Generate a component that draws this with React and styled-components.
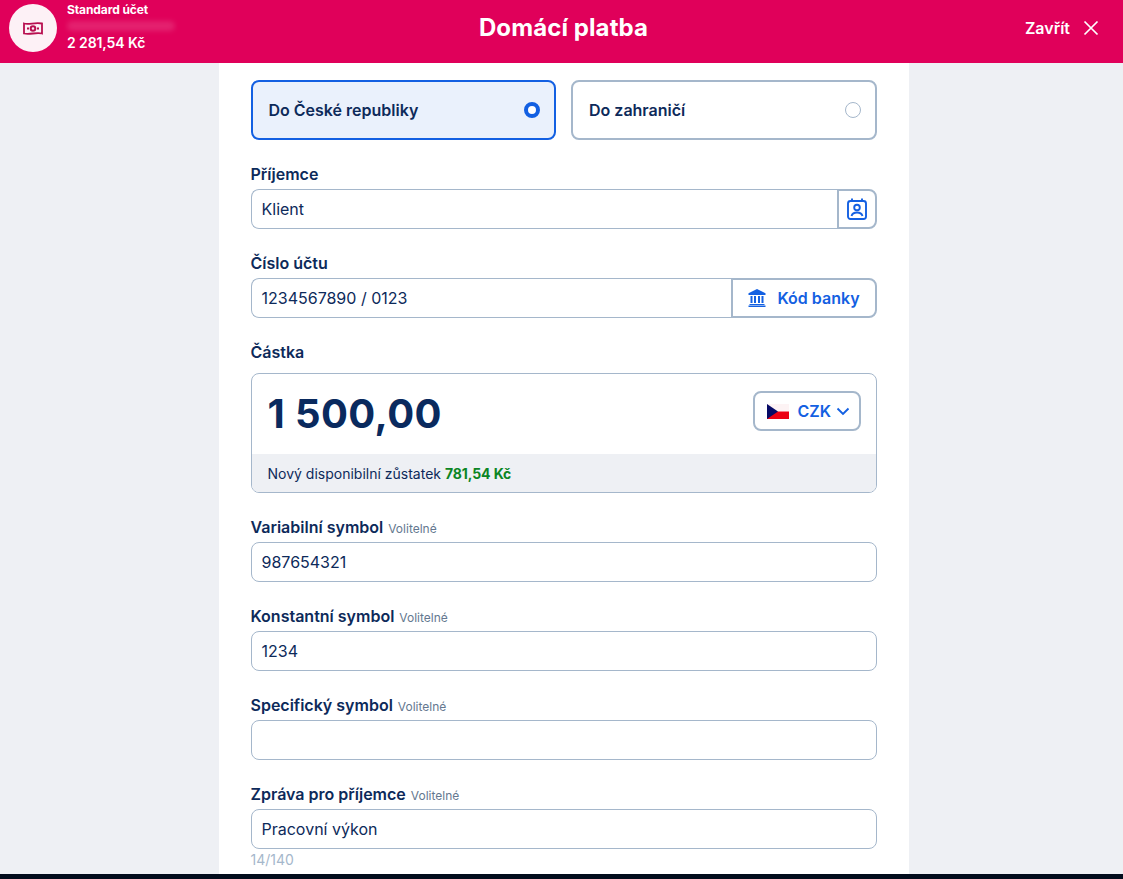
import React from "react";
import styled, { createGlobalStyle } from "styled-components";

const Global = createGlobalStyle`
  html, body { margin: 0; padding: 0; height: 100%; overflow: hidden; }
  body { font-family: Inter, "Noto Sans", sans-serif; color: #0d2a5a; }
  * { box-sizing: border-box; }
`;
const Page = styled.div`
  height: 879px; display: flex; flex-direction: column; background: #eef0f4; overflow: hidden;
`;
const Header = styled.header`
  flex: none; height: 63px; background: #e0005a; color: #fff; display: grid;
  grid-template-columns: 1fr auto 1fr; padding: 0 5px 7px 9px; align-items: center;
`;
const Account = styled.div`display: flex; align-items: center; gap: 10px;`;
const Avatar = styled.div`
  width: 48px; height: 48px; border-radius: 50%; background: #fdf1f6;
  display: flex; align-items: center; justify-content: center;
`;
const AccountText = styled.div`display: flex; flex-direction: column; margin-top: -1px;`;
const AccountName = styled.div`font-size: 12px; font-weight: 700; line-height: 15px; letter-spacing: -0.1px;`;
const Blurred = styled.div`
  width: 108px; height: 10px; margin: 4px 0 2px; border-radius: 5px; background: rgba(255,255,255,.13); filter: blur(2.5px);
`;
const Balance = styled.div`font-size: 14px; font-weight: 600; line-height: 20px; letter-spacing: -0.1px;`;
const Title = styled.h1`margin: 0; font-size: 24px; font-weight: 700; line-height: 32px; letter-spacing: 0.1px;`;
const Close = styled.div`
  justify-self: end; display: flex; align-items: center; gap: 13px; padding-right: 19px; font-size: 16px; font-weight: 600;
`;
const Body = styled.main`flex: 1; min-height: 0; display: flex; justify-content: center; padding-left: 4px;`;
const Card = styled.div`
  width: 690px; background: #fff; padding: 17px 32px 0; display: flex; flex-direction: column;
`;
const Choices = styled.div`display: grid; grid-template-columns: 1fr 1fr; gap: 15px; margin-bottom: 23px;`;
const Choice = styled.div`
  height: 60px; border-radius: 8px; padding: 0 14px 0 16px; display: flex; align-items: center; justify-content: space-between;
  border: 2px solid ${p => (p.$active ? "#1360e2" : "#a5b7cb")};
  background: ${p => (p.$active ? "#eaf1fc" : "#fff")};
  font-size: 16px; font-weight: 600; color: #0d2a5a;
`;
const Radio = styled.span`
  width: 16px; height: 16px; border-radius: 50%; background: #fff; flex: none;
  border: ${p => (p.$active ? "4px solid #1360e2" : "1px solid #a5b7cb")};
`;
const Field = styled.div`display: flex; flex-direction: column; margin-bottom: 23px;`;
const Label = styled.div`
  height: 26px; flex: none; display: flex; align-items: baseline; gap: 5px; line-height: 22px;
  font-size: 16px; font-weight: 600; color: #0d2a5a;
`;
const Optional = styled.span`font-size: 12px; font-weight: 400; color: #64788f;`;
const Input = styled.div`
  height: 40px; flex: 1 0 auto; min-width: 0; border: 1px solid #a5b7cb; border-radius: ${p => (p.$joined ? "8px 0 0 8px" : "8px")};
  ${p => (p.$joined ? "border-right: 0;" : "")}
  background: #fff; padding: 0 10px; display: flex; align-items: center; font-size: 16px; color: #0d2a5a;
`;
const Row = styled.div`display: flex;`;
const IconButton = styled.div`
  width: 40px; height: 40px; flex: none; border: 2px solid #a5b7cb; border-radius: 0 8px 8px 0; display: flex; align-items: center; justify-content: center;
`;
const BankButton = styled.div`
  width: 146px; height: 40px; flex: none; border: 2px solid #a5b7cb; border-radius: 0 8px 8px 0; display: flex; align-items: center; justify-content: center; gap: 11px; padding-left: 1px;
  color: #1360e2; font-size: 16px; font-weight: 600;
`;
const AmountBox = styled.div`
  height: 120px; flex: none; margin-top: 6px; border: 1px solid #a5b7cb; border-radius: 8px; overflow: hidden; display: flex; flex-direction: column; margin-bottom: 23px;
`;
const AmountTop = styled.div`
  flex: 1; display: flex; align-items: center; justify-content: space-between; padding: 0 15px 2px 16px;
`;
const AmountValue = styled.div`font-size: 40px; font-weight: 700; color: #0a2a5e; letter-spacing: 0.4px;`;
const Currency = styled.div`
  width: 108px; height: 40px; margin-bottom: 4px; border: 2px solid #a5b7cb; border-radius: 8px; display: flex; align-items: center; padding-left: 12px;
  color: #1360e2; font-size: 16px; font-weight: 600;
`;
const CurrencyCode = styled.span`margin: 0 5px 0 9px;`;
const AmountFoot = styled.div`
  height: 38px; flex: none; background: #eef0f4; padding: 0 16px; display: flex; align-items: center; gap: 4px; font-size: 14px; color: #0d2a5a;
`;
const Green = styled.span`color: #0b8523; font-weight: 700; letter-spacing: -0.1px;`;
const Counter = styled.div`font-size: 14px; line-height: 22px; color: #a5b7cb;`;
const Footer = styled.div`flex: none; height: 5px; background: #020c1c;`;

const Banknote = () => (
  <svg width="20" height="15" viewBox="0 0 20 15" fill="none" stroke="#b80f50" strokeWidth="1.800">
    <path d="M1 2.500c5 1.500 11-1.500 18 0v10c-6-1.500-12 1.500-18 0z" />
    <circle cx="10" cy="7.500" r="2.300" strokeWidth="2" />
    <path d="M4 7.500h2M14 7.500h2" strokeWidth="2" />
  </svg>
);
const CloseIcon = () => (
  <svg width="16" height="16" viewBox="0 0 16 16" stroke="#fff" strokeWidth="1.700" fill="none">
    <path d="M1.500 1.500l13 13M14.500 1.500l-13 13" />
  </svg>
);
const ContactIcon = () => (
  <svg width="20" height="22" viewBox="0 0 20 22" fill="none" stroke="#1360e2" strokeWidth="1.900">
    <rect x="1" y="3" width="18" height="18" rx="2.500" />
    <path d="M5 3V0.500M15 3V0.500" />
    <circle cx="10" cy="9.500" r="2.800" />
    <path d="M4.500 18c.8-2.500 3-3.500 5.500-3.500s4.700 1 5.500 3.500" />
  </svg>
);
const BankIcon = () => (
  <svg width="18" height="18" viewBox="0 0 18 18" fill="#1360e2">
    <path d="M9 0l8.500 4.200V6H.5V4.200z" />
    <path d="M2.500 7h2v7h-2zM6 7h2v7H6zM10 7h2v7h-2zM13.500 7h2v7h-2zM1.500 15h15v1h-15zM0.500 16.500h17V18H.5z" />
  </svg>
);
const Flag = () => (
  <svg width="22" height="15" viewBox="0 0 22 15">
    <rect width="22" height="7.500" fill="#fdf3f4" />
    <rect y="7.500" width="22" height="7.500" fill="#ec0013" />
    <path d="M0 0l11 7.500L0 15z" fill="#060a66" />
  </svg>
);
const Chevron = () => (
  <svg width="14" height="9" viewBox="0 0 14 9" fill="none" stroke="#1360e2" strokeWidth="1.900">
    <path d="M1.500 1.500L7 7l5.500-5.500" />
  </svg>
);

const Text = ({ label, optional, value, children }) => (
  <Field>
    <Label>{label}{optional && <Optional>Volitelné</Optional>}</Label>
    {children || <Input>{value}</Input>}
  </Field>
);

export default function App() {
  return (
    <Page>
      <Global />
      <Header>
        <Account>
          <Avatar><Banknote /></Avatar>
          <AccountText>
            <AccountName>Standard účet</AccountName>
            <Blurred />
            <Balance>2 281,54 Kč</Balance>
          </AccountText>
        </Account>
        <Title>Domácí platba</Title>
        <Close>Zavřít <CloseIcon /></Close>
      </Header>
      <Body>
        <Card>
          <Choices>
            <Choice $active>Do České republiky<Radio $active /></Choice>
            <Choice>Do zahraničí<Radio /></Choice>
          </Choices>
          <Text label="Příjemce">
            <Row><Input $joined>Klient</Input><IconButton><ContactIcon /></IconButton></Row>
          </Text>
          <Text label="Číslo účtu">
            <Row><Input $joined>1234567890 / 0123</Input><BankButton><BankIcon />Kód banky</BankButton></Row>
          </Text>
          <Label>Částka</Label>
          <AmountBox>
            <AmountTop>
              <AmountValue>1 500,00</AmountValue>
              <Currency><Flag /><CurrencyCode>CZK</CurrencyCode><Chevron /></Currency>
            </AmountTop>
            <AmountFoot>Nový disponibilní zůstatek <Green>781,54 Kč</Green></AmountFoot>
          </AmountBox>
          <Text label="Variabilní symbol" optional value="987654321" />
          <Text label="Konstantní symbol" optional value="1234" />
          <Text label="Specifický symbol" optional value="" />
          <Field>
            <Label>Zpráva pro příjemce<Optional>Volitelné</Optional></Label>
            <Input>Pracovní výkon</Input>
            <Counter>14/140</Counter>
          </Field>
        </Card>
      </Body>
      <Footer />
    </Page>
  );
}
